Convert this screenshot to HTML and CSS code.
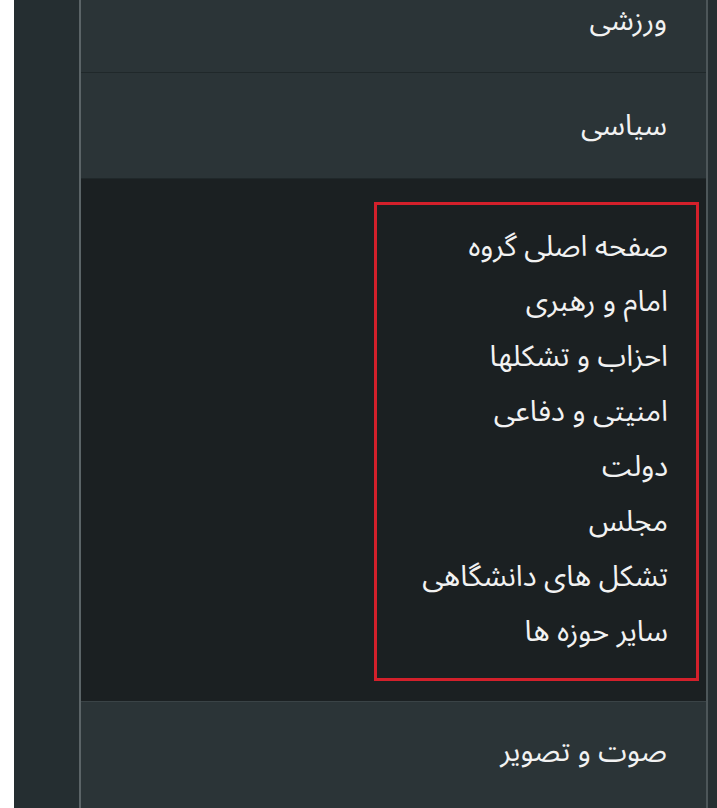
FILE: index.html
```html
<!DOCTYPE html>
<html lang="fa" dir="rtl">
<head>
<meta charset="utf-8">
<link rel="stylesheet" href="styles.css">
</head>
<body>
<div class="page">
  <nav class="sidebar">
    <div class="menu">
      <div class="row first">ورزشی</div>
      <div class="row">سیاسی</div>
      <div class="submenu">
        <ul class="box">
          <li>صفحه اصلی گروه</li>
          <li>امام و رهبری</li>
          <li>احزاب و تشکلها</li>
          <li>امنیتی و دفاعی</li>
          <li>دولت</li>
          <li>مجلس</li>
          <li>تشکل های دانشگاهی</li>
          <li>سایر حوزه ها</li>
        </ul>
      </div>
      <div class="row last">صوت و تصویر</div>
    </div>
  </nav>
</div>
</body>
</html>
```
FILE: styles.css
```css
html, body {
  margin: 0;
  padding: 0;
  background: #ffffff;
  height: 100%;
  overflow: hidden;
}
.page {
  height: 808px;
  padding-left: 14px;
  direction: ltr;
}
.sidebar {
  height: 100%;
  background: #252e31;
  padding-left: 65px;
  padding-right: 9px;
  direction: rtl;
  overflow: hidden;
}
.menu {
  border-left: 2px solid #5b6467;
  border-right: 2px solid #4d5659;
  margin-top: -33px;
  font-family: "Noto Sans Arabic", "Noto Sans Arabic UI", "DejaVu Sans", sans-serif;
  color: #f2f2f2;
  font-size: 29px;
}
.row {
  height: 105px;
  line-height: 36px;
  background: #2b3437;
  display: flex;
  align-items: center;
  padding-right: 39px;
  border-bottom: 1px solid #20282a;
}
.row.first {
  padding-top: 2px;
  height: 103px;
}
.row.last {
  border-bottom: none;
  border-top: 1px solid #3a4346;
  padding-bottom: 14px;
  height: 99px;
}
.submenu {
  background: #1b2022;
  padding: 23px 7px 20px 0;
  display: flex;
  justify-content: flex-start;
}
.box {
  list-style: none;
  margin: 0;
  width: 291px;
  border: 3px solid #d3202b;
  padding: 14px 28px 19px 0;
}
.box li {
  height: 55px;
  line-height: 55px;
  white-space: nowrap;
}
```
